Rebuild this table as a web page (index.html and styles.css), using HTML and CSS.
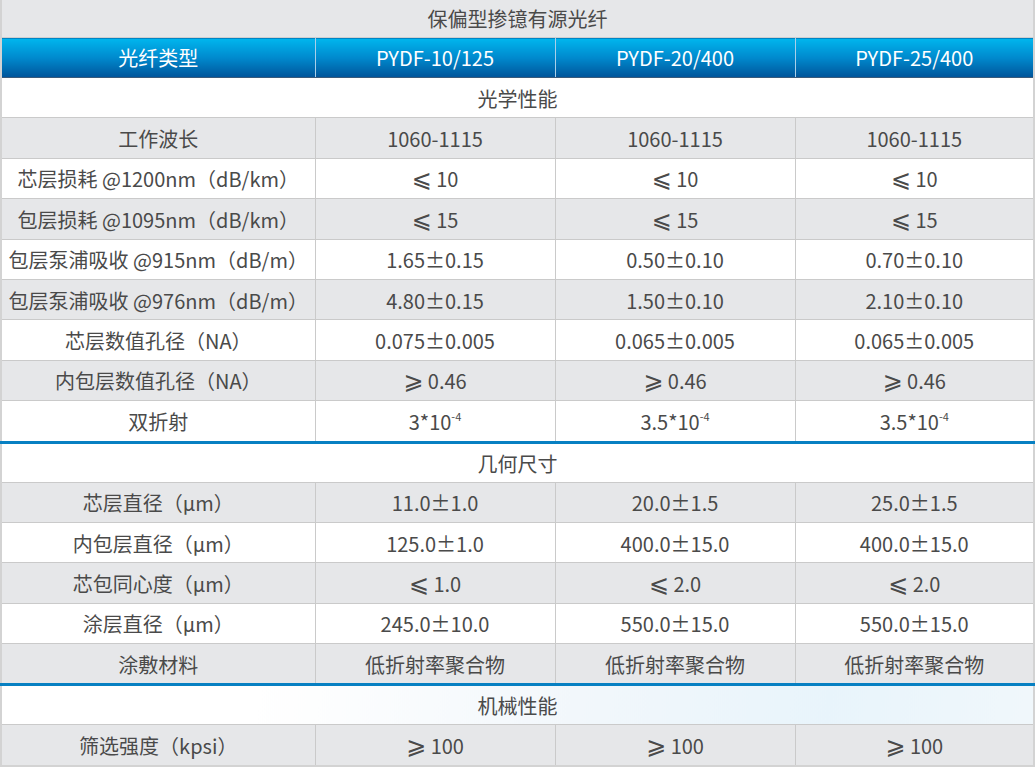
FILE: index.html
```html
<!DOCTYPE html>
<html lang="zh-CN">
<head>
<meta charset="utf-8">
<title>保偏型掺镱有源光纤</title>
<link rel="stylesheet" href="styles.css">
</head>
<body>
<table class="spec">
  <colgroup><col class="c1"><col class="c2"><col class="c2"><col class="c4"></colgroup>
  <tr class="title"><td colspan="4">保偏型掺镱有源光纤</td></tr>
  <tr class="head"><th>光纤类型</th><th>PYDF-10/125</th><th>PYDF-20/400</th><th>PYDF-25/400</th></tr>
  <tr class="sec"><td colspan="4">光学性能</td></tr>
  <tr class="g"><td>工作波长</td><td>1060-1115</td><td>1060-1115</td><td>1060-1115</td></tr>
  <tr class="w"><td>芯层损耗 @1200nm（dB/km）</td><td><span class="op">⩽</span> 10</td><td><span class="op">⩽</span> 10</td><td><span class="op">⩽</span> 10</td></tr>
  <tr class="g"><td>包层损耗 @1095nm（dB/km）</td><td><span class="op">⩽</span> 15</td><td><span class="op">⩽</span> 15</td><td><span class="op">⩽</span> 15</td></tr>
  <tr class="w"><td>包层泵浦吸收 @915nm（dB/m）</td><td>1.65±0.15</td><td>0.50±0.10</td><td>0.70±0.10</td></tr>
  <tr class="g"><td>包层泵浦吸收 @976nm（dB/m）</td><td>4.80±0.15</td><td>1.50±0.10</td><td>2.10±0.10</td></tr>
  <tr class="w"><td>芯层数值孔径（NA）</td><td>0.075±0.005</td><td>0.065±0.005</td><td>0.065±0.005</td></tr>
  <tr class="g"><td>内包层数值孔径（NA）</td><td><span class="op">⩾</span> 0.46</td><td><span class="op">⩾</span> 0.46</td><td><span class="op">⩾</span> 0.46</td></tr>
  <tr class="w"><td>双折射</td><td>3*10<sup>-4</sup></td><td>3.5*10<sup>-4</sup></td><td>3.5*10<sup>-4</sup></td></tr>
  <tr class="sec line"><td colspan="4">几何尺寸</td></tr>
  <tr class="g"><td>芯层直径（μm）</td><td>11.0±1.0</td><td>20.0±1.5</td><td>25.0±1.5</td></tr>
  <tr class="w"><td>内包层直径（μm）</td><td>125.0±1.0</td><td>400.0±15.0</td><td>400.0±15.0</td></tr>
  <tr class="g"><td>芯包同心度（μm）</td><td><span class="op">⩽</span> 1.0</td><td><span class="op">⩽</span> 2.0</td><td><span class="op">⩽</span> 2.0</td></tr>
  <tr class="w"><td>涂层直径（μm）</td><td>245.0±10.0</td><td>550.0±15.0</td><td>550.0±15.0</td></tr>
  <tr class="g"><td>涂敷材料</td><td>低折射率聚合物</td><td>低折射率聚合物</td><td>低折射率聚合物</td></tr>
  <tr class="sec line tint"><td colspan="4">机械性能</td></tr>
  <tr class="g"><td>筛选强度（kpsi）</td><td><span class="op">⩾</span> 100</td><td><span class="op">⩾</span> 100</td><td><span class="op">⩾</span> 100</td></tr>
</table>
</body>
</html>
```

FILE: styles.css
```css
html, body {
  margin: 0;
  padding: 0;
  background: #ffffff;
}

.spec {
  width: 1035px;
  table-layout: fixed;
  border-collapse: collapse;
  font-family: "Noto Sans CJK SC", "Noto Sans", sans-serif;
  font-size: 20px;
  color: #4a4a4a;
  border-left: 2px solid #d3d3d3;
  border-right: 2px solid #d3d3d3;
  border-bottom: 2px solid #d3d3d3;
}

.c1 { width: 314px; }
.c2 { width: 240px; }
.c4 { width: 239px; }

.spec td,
.spec th {
  padding: 0;
  text-align: center;
  vertical-align: middle;
  border: 1px solid #cacaca;
  line-height: 24px;
  white-space: nowrap;
}

.title td {
  height: 37px;
  background: #e6e7e9;
  border-top: none;
  border-bottom: 1px solid #cfcfcf;
}

.head th {
  height: 39px;
  font-weight: normal;
  color: #ffffff;
  background: linear-gradient(to bottom, #00b6ee 0%, #0089cd 50%, #00549a 100%);
  border-left: 1px solid #a9cfe9;
  border-right: 1px solid #a9cfe9;
  border-top: none;
  border-bottom: 1px solid #3a5a7a;
}

.spec tr.g td,
.spec tr.w td,
.spec tr.sec td {
  height: 37.4px;
  padding-top: 2px;
}

.g td { background: #e6e7e9; }
.w td { background: #ffffff; }
.sec td { background: #ffffff; }

.spec tr.line td {
  border-top: 3px solid #0780c2;
  height: 36px;
}

.tint td {
  background: linear-gradient(100deg, #ffffff 0%, #ffffff 25%, #f2f7fb 55%, #e8f4fb 80%, #f0f7fb 100%);
}

.op {
  font-family: "DejaVu Sans", sans-serif;
  font-size: 24px;
  line-height: 0;
}

sup {
  font-size: 11px;
  line-height: 0;
  vertical-align: 9px;
}
```
